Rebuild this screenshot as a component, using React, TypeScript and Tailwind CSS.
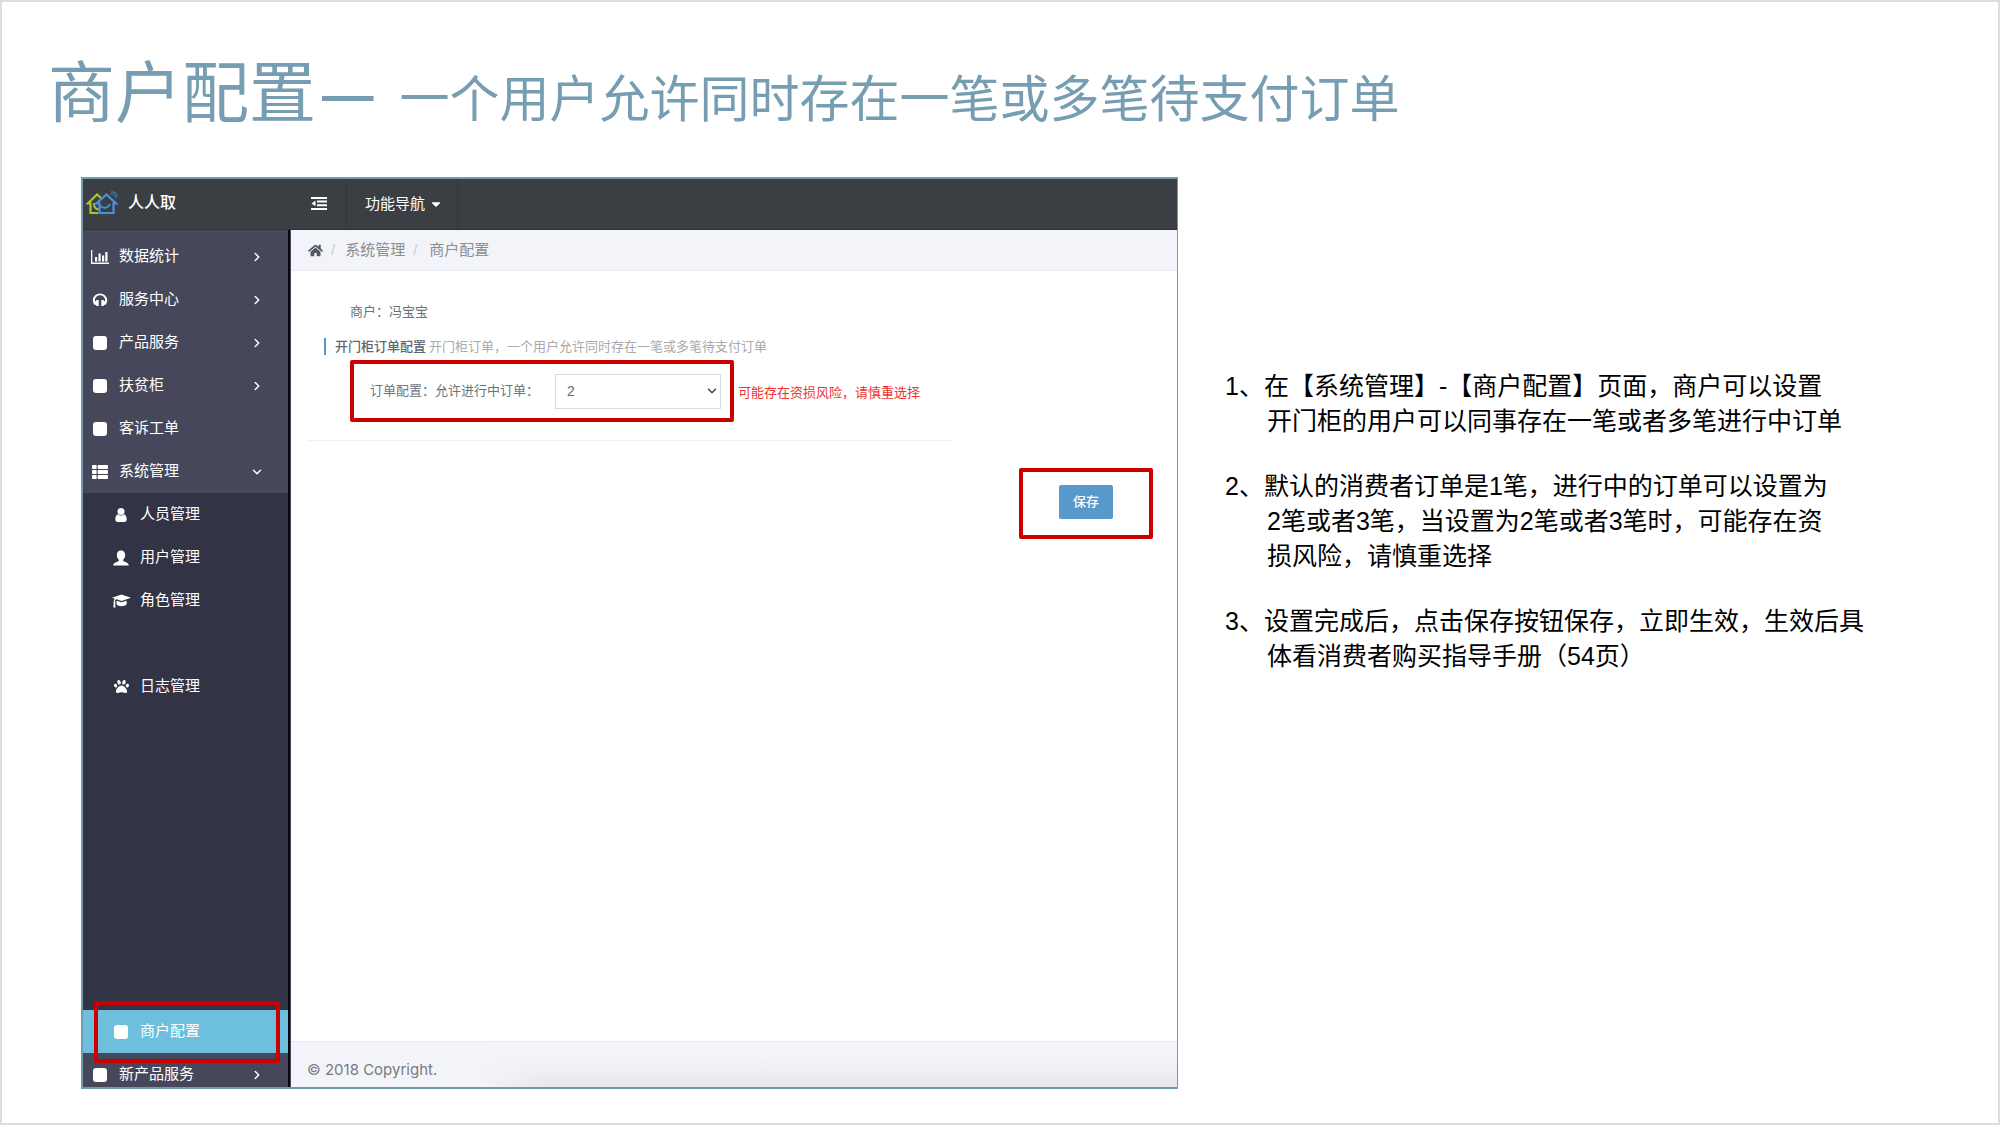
import React from "react";
import { FaPaw, FaThList, FaHome, FaCaretDown } from "react-icons/fa";
import { ChevronDown, ChevronRight } from "lucide-react";

type IconProps = { className?: string };

function LogoIcon() {
  return (
    <svg viewBox="0 0 32 24" className="h-6 w-8" fill="none" strokeWidth="2.200" aria-hidden="true">
      <path d="M12 22H4.500V12.500H1.800L11 3.500l4 3.500" stroke="#a8c92a" />
      <path d="M8 12c-.5 4 1.500 6 5 6.500" stroke="#a8c92a" strokeWidth="1.800" />
      <path d="M13.500 12.500h-3L20.500 3.500l9.700 9h-2.700V22H13.500z" stroke="#4a90dc" />
      <path d="M14 14.500c3 3.500 8 3 10-1.500" stroke="#4a90dc" strokeWidth="1.800" />
      <path d="M24.500 3c3 0 5 1.500 5.500 4.500M25 .8c4 0 6 2 6.500 5" stroke="#3f78b0" strokeWidth="1.200" />
    </svg>
  );
}

function BarsIcon({ className }: IconProps) {
  return (
    <svg viewBox="0 0 18 14" className={className} fill="currentColor" aria-hidden="true">
      <path d="M0 0h1.300v12.500H18V14H0zM4 7h2.200v4.500H4zM7.500 3.500h2.200v8H7.500zM11 5.500h2.200v6H11zM14.300 2h2.200v9.500h-2.200z" />
    </svg>
  );
}

function HeadphonesIcon({ className }: IconProps) {
  return (
    <svg viewBox="0 0 16 14" className={className} fill="currentColor" aria-hidden="true">
      <path d="M8 .5a7.200 6.800 0 0 1 7.200 6.800c0 1.700-.6 3.200-1.700 4.400l-1.600.2-.2 1.100H9.300V7h2.400l.2 1.300h.8c.3-.4.400-.7.4-1.200a5.100 4.800 0 0 0-10.200 0c0 .5.1.8.4 1.200h.8L4.300 7h2.400v6H4.300l-.2-1.100-1.600-.2A6.300 6.300 0 0 1 .8 7.300 7.200 6.800 0 0 1 8 .5z" />
    </svg>
  );
}

function PersonIcon({ className }: IconProps) {
  return (
    <svg viewBox="0 0 12 14" className={className} fill="currentColor" aria-hidden="true">
      <circle cx="6" cy="3.600" r="3.500" />
      <path d="M3 6.200C1 6.800.3 9 .3 11.200.3 13 1.200 14 2.700 14h6.600c1.500 0 2.400-1 2.400-2.800 0-2.200-.7-4.400-2.700-5-1 1-1.900 1.300-3 1.300S4 7.200 3 6.200z" />
    </svg>
  );
}

function BustIcon({ className }: IconProps) {
  return (
    <svg viewBox="0 0 16 15" className={className} fill="currentColor" aria-hidden="true">
      <path d="M8 0c2.700 0 4.200 1.800 4.200 4.500 0 2-.9 3.700-2 4.700v1.200c.6.8 5.600 1.300 5.600 4.600H.2c0-3.300 5-3.800 5.600-4.600V9.200c-1.100-1-2-2.700-2-4.700C3.800 1.800 5.300 0 8 0z" />
    </svg>
  );
}

function CapIcon({ className }: IconProps) {
  return (
    <svg viewBox="0 0 19 14" className={className} fill="currentColor" aria-hidden="true">
      <path d="M9.500.5 19 3.700 9.500 6.900 4.600 5.300c-1 .2-1.600.9-1.700 2.200.6.300.8 1 .3 1.500L3.500 13.500H1.300L1.700 9c-.5-.5-.4-1.200.1-1.500.1-1.200.4-2 .9-2.700L0 3.700z" />
      <path d="M4.600 6.700 9.500 8.300l5-1.600.3 3.100c-.2 1.500-2.600 2.400-5.200 2.400s-5-.9-5.200-2.400z" />
    </svg>
  );
}

function OutdentIcon() {
  return (
    <svg viewBox="0 0 16 13" className="h-[13px] w-4" fill="currentColor" aria-hidden="true">
      <path d="M0 0h16v2H0zM6 3.600h10v2H6zM6 7.200h10v2H6zM0 11h16v2H0zM4.500 3.600v5.600L.5 6.400z" />
    </svg>
  );
}

type Item = { label: string; icon: React.ReactNode; arrow?: "right" | "down" };

const square = <span className="size-3.5 rounded-[3px] bg-white" />;

const items: Item[] = [
  { label: "数据统计", icon: <BarsIcon className="h-3.5 w-[18px]" />, arrow: "right" },
  { label: "服务中心", icon: <HeadphonesIcon className="h-3.5 w-4" />, arrow: "right" },
  { label: "产品服务", icon: square, arrow: "right" },
  { label: "扶贫柜", icon: square, arrow: "right" },
  { label: "客诉工单", icon: square },
  { label: "系统管理", icon: <FaThList className="size-4" />, arrow: "down" },
];

const subItems: (Item | null)[] = [
  { label: "人员管理", icon: <PersonIcon className="h-3.5 w-3" /> },
  { label: "用户管理", icon: <BustIcon className="h-4 w-4" /> },
  { label: "角色管理", icon: <CapIcon className="h-3.5 w-[19px]" /> },
  null,
  { label: "日志管理", icon: <FaPaw className="size-[15px]" /> },
];

function Row({ label, icon, arrow }: Item) {
  return (
    <a href="#" className="flex h-[43px] items-center pl-2 pr-6 text-white">
      <span className="flex w-[18px] justify-center">{icon}</span>
      <span className="ml-2.5 flex-1 text-[15px]">{label}</span>
      {arrow === "right" && <ChevronRight className="size-3.5" strokeWidth={2.5} />}
      {arrow === "down" && <ChevronDown className="size-3.5" strokeWidth={2.5} />}
    </a>
  );
}

function SubRow({ item, active }: { item: Item; active?: boolean }) {
  return (
    <a href="#" className={active ? "flex h-[43px] items-center bg-[#6cbfdd] pl-7 text-white" : "flex h-[43px] items-center pl-7 text-white"}>
      <span className="flex w-5 justify-center">{item.icon}</span>
      <span className="ml-[9px] text-[15px]">{item.label}</span>
    </a>
  );
}

function Sidebar() {
  return (
    <aside className="flex w-[208px] shrink-0 flex-col border-r border-[#46475b] bg-[#46475b]">
      <nav className="flex flex-1 flex-col border-r-2 border-[#08080c] pt-[5px]">
        {items.map((item) => (
          <Row key={item.label} {...item} />
        ))}
        <div className="relative flex flex-1 flex-col bg-[#323445]">
          {subItems.map((item, i) => (item ? <SubRow key={item.label} item={item} /> : <div key={i} className="h-[43px]" />))}
          <div className="mt-auto">
            <SubRow item={{ label: "商户配置", icon: square }} active />
          </div>
          <div className="pointer-events-none absolute -bottom-2.5 left-[11px] right-2 h-[62px] rounded-xs border-4 border-[#cc0000]" />
        </div>
        <div className="h-[34px] overflow-hidden">
          <Row label="新产品服务" icon={square} arrow="right" />
        </div>
      </nav>
    </aside>
  );
}

function AppWindow() {
  return (
    <section className="flex flex-col border-2 border-r border-[#6f9bb0]">
      <header className="flex h-[51px] items-center border-b border-[#2f3236] bg-[#3b3e42] text-white">
        <div className="flex w-[205px] items-center pb-0.5 pl-[3px]">
          <LogoIcon />
          <span className="ml-2.5 text-base font-medium">人人取</span>
        </div>
        <button type="button" aria-label="收起菜单" className="flex h-full w-[59px] items-center justify-end border-r border-[#323539] pb-0.5 pr-[19px]">
          <OutdentIcon />
        </button>
        <button type="button" className="flex h-full items-center gap-1 border-r border-[#323539] pl-[18px] pr-3.5 text-[15px]">
          功能导航
          <FaCaretDown className="size-3.5" />
        </button>
      </header>
      <div className="flex flex-1">
        <Sidebar />
        <div className="flex min-w-0 flex-1 flex-col">
          <nav className="flex h-[41px] items-center border-b border-[#ebecf1] bg-[#f3f4f9] pl-[17px] text-[15px] text-[#8a8c90]">
            <a href="#" aria-label="首页"><FaHome className="size-[15px] text-[#4f5a63]" /></a>
            <span className="ml-2 text-[#c8c9cc]">/</span>
            <a href="#" className="ml-2.5">系统管理</a>
            <span className="ml-2 text-[#c8c9cc]">/</span>
            <span className="ml-3">商户配置</span>
          </nav>
          <main className="flex-1 pl-4 pr-6 text-[13px] text-[#6b747b]">
            <div className="mt-[15px] flex h-[155px] max-w-[646px] flex-col rounded-xs border-b border-[#f1f1f3] pt-4">
              <p className="pl-[43px] leading-5">商户：冯宝宝</p>
              <div className="ml-[17px] mt-4 flex h-[17px] items-center whitespace-nowrap border-l-2 border-[#4f97cf] pl-[9px]">
                <span className="font-medium text-[#5f686f]">开门柜订单配置</span>
                <span className="ml-[3px] text-[#aaa]">开门柜订单，一个用户允许同时存在一笔或多笔待支付订单</span>
              </div>
              <div className="ml-[43px] mt-[5px] flex items-center whitespace-nowrap">
                <div className="flex h-[62px] w-[384px] items-center rounded-xs border-4 border-[#cc0000] pl-4">
                  <label htmlFor="orders">订单配置：允许进行中订单：</label>
                  <div className="relative ml-auto mr-[9px] w-[166px]">
                    <select id="orders" defaultValue="2" className="h-[35px] w-full appearance-none border border-[#d5dce0] bg-white pl-[11px] text-[14px] text-[#666]">
                      <option>1</option>
                      <option>2</option>
                      <option>3</option>
                    </select>
                    <ChevronDown className="pointer-events-none absolute right-0.5 top-2.5 size-3.5 text-[#444]" strokeWidth={2.5} />
                  </div>
                </div>
                <span className="ml-1 mt-1 text-[#e33]">可能存在资损风险，请慎重选择</span>
              </div>
            </div>
            <div className="mt-[27px] flex justify-end">
              <div className="flex h-[71px] w-[134px] items-center justify-center rounded-xs border-4 border-[#cc0000] pb-1">
                <button type="button" className="h-[34px] w-[54px] rounded-xs bg-[#5899cc] text-[13px] font-medium text-white">保存</button>
              </div>
            </div>
          </main>
          <footer className="flex h-[46px] items-center border-t border-[#e6e8ee] bg-[linear-gradient(to_right,#f3f4f9_190px,transparent_250px),linear-gradient(to_bottom,#f4f5fa_30%,#e8e7ed)] pl-4 pt-3 font-['Inter','Noto_Sans_CJK_SC',sans-serif] text-[15px] text-[#777b80]">
            © 2018 Copyright.
          </footer>
        </div>
      </div>
    </section>
  );
}

const notes: string[][] = [
  ["1、在【系统管理】-【商户配置】页面，商户可以设置", "开门柜的用户可以同事存在一笔或者多笔进行中订单"],
  ["2、默认的消费者订单是1笔，进行中的订单可以设置为", "2笔或者3笔，当设置为2笔或者3笔时，可能存在资", "损风险，请慎重选择"],
  ["3、设置完成后，点击保存按钮保存，立即生效，生效后具", "体看消费者购买指导手册（54页）"],
];

export default function App() {
  return (
    <div className="flex min-h-screen flex-col border-2 border-[#dcdcdc] bg-white pb-[34px] font-['Liberation_Sans','Noto_Sans_CJK_SC',sans-serif]">
      <h1 className="mt-[42px] flex h-[100px] items-baseline whitespace-pre pl-[46px] text-[#769db1]">
        <span className="text-[67px] leading-[100px]">商户配置</span>
        <span className="ml-[3px] font-['Noto_Sans_CJK_SC',sans-serif] text-[64px] font-medium leading-none">—</span>
        <span className="ml-[23px] text-[50px]">一个用户允许同时存在一笔或多笔待支付订单</span>
      </h1>
      <div className="mt-[33px] grid flex-1 grid-cols-[1097fr_726fr] gap-x-[47px] pl-[79px] pr-[47px]">
        <AppWindow />
        <ol className="flex flex-col gap-[30px] pt-[192px] text-[25px] leading-[35px] text-black">
          {notes.map((lines) => (
            <li key={lines[0]} className="whitespace-nowrap pl-[42px] -indent-[42px]">
              {lines.map((line, i) => (
                <React.Fragment key={line}>
                  {i > 0 && <br />}
                  {line}
                </React.Fragment>
              ))}
            </li>
          ))}
        </ol>
      </div>
    </div>
  );
}
